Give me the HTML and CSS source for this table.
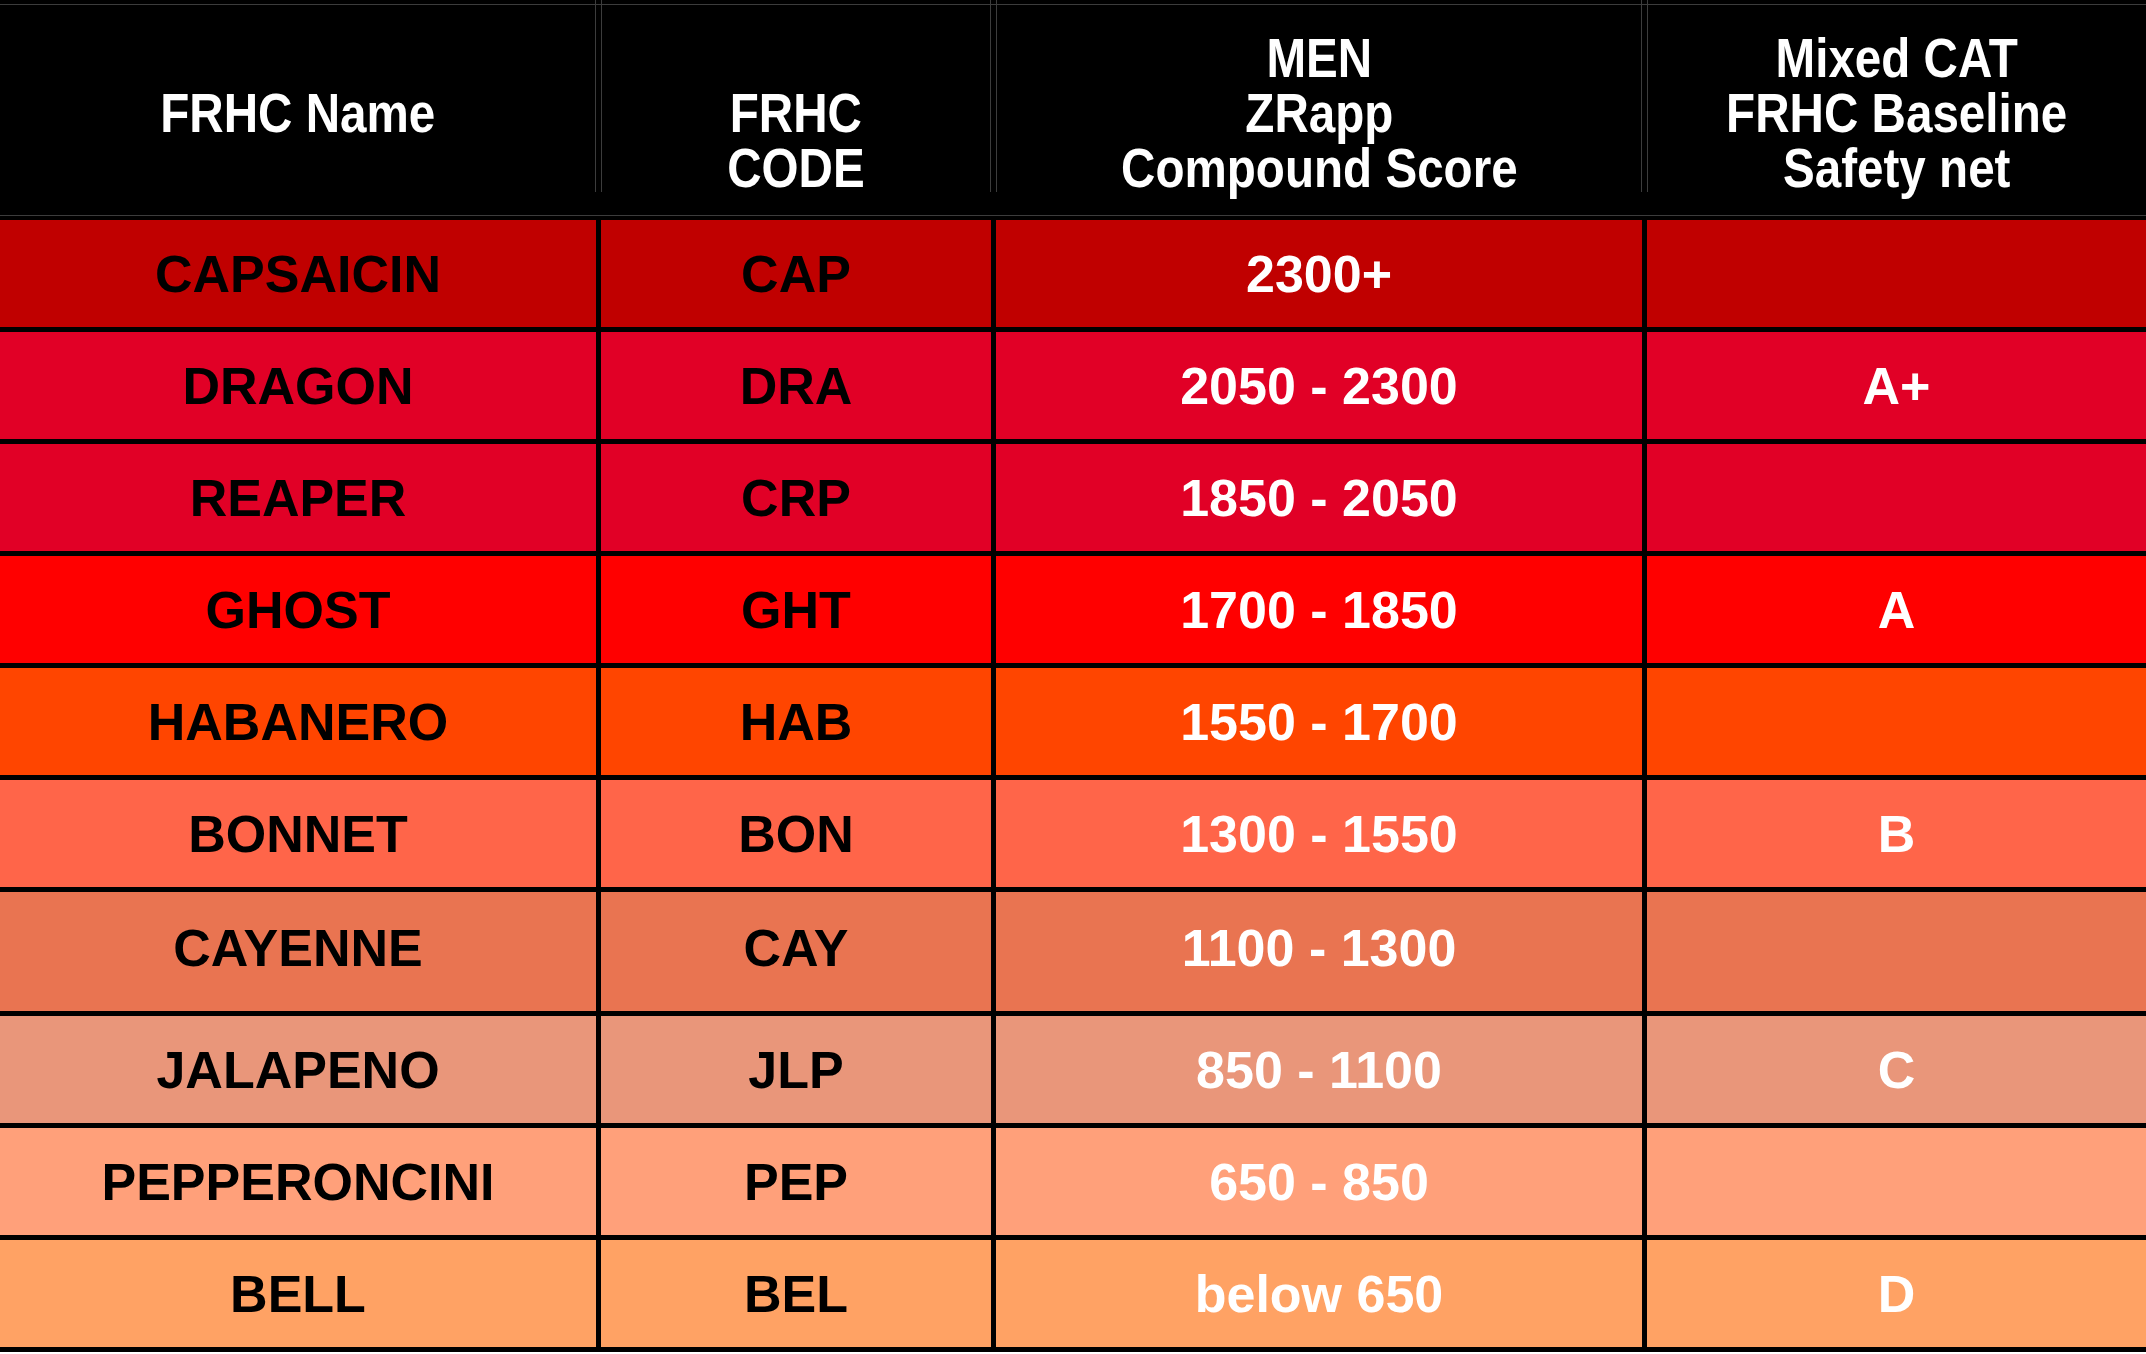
FILE: index.html
```html
<!DOCTYPE html>
<html lang="en">
<head>
<meta charset="utf-8">
<title>FRHC Categories</title>
<link rel="stylesheet" href="styles.css">
</head>
<body>
<div class="sheet">
  <div class="head">
    <div class="hcell hcell-first"><span class="hlabel">FRHC Name</span></div>
    <div class="hcell hcell-low"><span class="hlabel">FRHC<br>CODE</span></div>
    <div class="hcell"><span class="hlabel">MEN<br>ZRapp<br>Compound Score</span></div>
    <div class="hcell hcell-last"><span class="hlabel">Mixed CAT<br>FRHC Baseline<br>Safety net</span></div>
  </div>
  <div class="rows">
    <div class="row row-cap">
      <div class="cell dark">CAPSAICIN</div><div class="cell dark">CAP</div><div class="cell light">2300+</div><div class="cell light"></div>
    </div>
    <div class="row row-dra">
      <div class="cell dark">DRAGON</div><div class="cell dark">DRA</div><div class="cell light">2050 - 2300</div><div class="cell light">A+</div>
    </div>
    <div class="row row-crp">
      <div class="cell dark">REAPER</div><div class="cell dark">CRP</div><div class="cell light">1850 - 2050</div><div class="cell light"></div>
    </div>
    <div class="row row-ght">
      <div class="cell dark">GHOST</div><div class="cell dark">GHT</div><div class="cell light">1700 - 1850</div><div class="cell light">A</div>
    </div>
    <div class="row row-hab">
      <div class="cell dark">HABANERO</div><div class="cell dark">HAB</div><div class="cell light">1550 - 1700</div><div class="cell light"></div>
    </div>
    <div class="row row-bon">
      <div class="cell dark">BONNET</div><div class="cell dark">BON</div><div class="cell light">1300 - 1550</div><div class="cell light">B</div>
    </div>
    <div class="row row-cay row-tall">
      <div class="cell dark">CAYENNE</div><div class="cell dark">CAY</div><div class="cell light">1100 - 1300</div><div class="cell light"></div>
    </div>
    <div class="row row-jlp">
      <div class="cell dark">JALAPENO</div><div class="cell dark">JLP</div><div class="cell light">850 - 1100</div><div class="cell light">C</div>
    </div>
    <div class="row row-pep">
      <div class="cell dark">PEPPERONCINI</div><div class="cell dark">PEP</div><div class="cell light">650 - 850</div><div class="cell light"></div>
    </div>
    <div class="row row-bel">
      <div class="cell dark">BELL</div><div class="cell dark">BEL</div><div class="cell light">below 650</div><div class="cell light">D</div>
    </div>
  </div>
</div>
</body>
</html>
```
FILE: styles.css
```css
html, body {
  margin: 0;
  padding: 0;
  background: #ffffff;
}

.sheet {
  width: 2146px;
  font-family: "Liberation Sans", Arial, sans-serif;
  font-weight: 700;
}

.head {
  display: grid;
  grid-template-columns: 596px 390px 646px 499px;
  column-gap: 5px;
  height: 220px;
  box-sizing: border-box;
  color: #ffffff;
  font-family: "Liberation Sans", Arial, sans-serif;
  font-size: 56px;
  line-height: 55px;
  background:
    linear-gradient(#3c3c3c, #3c3c3c) 0 4px / 100% 1px no-repeat,
    linear-gradient(#3c3c3c, #3c3c3c) 0 215px / 100% 1px no-repeat,
    #000000;
}

.hcell {
  display: flex;
  flex-direction: column;
  justify-content: center;
  align-items: center;
  text-align: center;
  padding-top: 4px;
  background-image:
    linear-gradient(#3c3c3c, #3c3c3c),
    linear-gradient(#3c3c3c, #3c3c3c);
  background-size: 1px 192px, 1px 192px;
  background-position: left top, right top;
  background-repeat: no-repeat;
}

.hlabel {
  display: block;
  white-space: nowrap;
  transform: scaleX(0.85);
}

.hcell-first {
  background-image: linear-gradient(#3c3c3c, #3c3c3c);
  background-size: 1px 192px;
  background-position: right top;
}

.hcell-last {
  background-image: linear-gradient(#3c3c3c, #3c3c3c);
  background-size: 1px 192px;
  background-position: left top;
}

.hcell-low {
  padding-top: 59px;
}

.rows {
  display: flex;
  flex-direction: column;
  gap: 5px;
  padding-bottom: 5px;
  background: #000000;
}

.row {
  display: grid;
  grid-template-columns: 596px 390px 646px 499px;
  column-gap: 5px;
  height: 107px;
  font-size: 52px;
  line-height: 1;
}

.row-tall {
  height: 119px;
}

.row-tall .cell {
  padding-bottom: 8px;
}

.cell {
  display: flex;
  align-items: center;
  justify-content: center;
  text-align: center;
}

.dark { color: #000000; }
.light { color: #ffffff; }

.row-cap .cell { background: #c00000; }
.row-dra .cell { background: #e10026; }
.row-crp .cell { background: #e10026; }
.row-ght .cell { background: #ff0000; }
.row-hab .cell { background: #ff4500; }
.row-bon .cell { background: #ff6549; }
.row-cay .cell { background: #e97451; }
.row-jlp .cell { background: #e9967a; }
.row-pep .cell { background: #ffa07a; }
.row-bel .cell { background: #ffa264; }
```
